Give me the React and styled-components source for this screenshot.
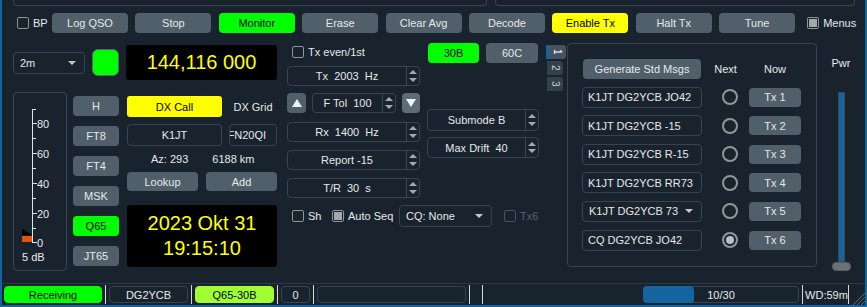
import React from "react";
import styled, { createGlobalStyle } from "styled-components";

const BG = "#19232d";
const LINE = "#37444f";
const BTN = "#505f69";
const TEXT = "#e6e8ea";
const BLUE = "#1464a0";

const GlobalStyle = createGlobalStyle`
  html, body { margin: 0; padding: 0; background: ${BG}; }
  * { box-sizing: border-box; }
`;

const Window = styled.div`
  width: 867px;
  height: 307px;
  background: ${BG};
  border-left: 2px solid ${BLUE};
  border-right: 2px solid ${BLUE};
  border-bottom: 2px solid ${BLUE};
  display: flex;
  flex-direction: column;
  font-family: "Liberation Sans", Arial, sans-serif;
  font-size: 11px;
  color: ${TEXT};
  overflow: hidden;
`;

const TopPanes = styled.div`
  display: flex;
  height: 6px;
  padding-left: 11px;
  gap: 8px;
`;

const Pane = styled.div`
  width: ${(p) => p.$w}px;
  height: 6px;
  border: 1px solid ${LINE};
  border-top: none;
  border-radius: 0 0 4px 4px;
`;

const ButtonRow = styled.div`
  display: flex;
  align-items: center;
  height: 20px;
  margin-top: 7px;
  padding-left: 15px;
`;

const ButtonGroup = styled.div`
  display: flex;
  gap: 7.4px;
`;

const Button = styled.div`
  width: ${(p) => p.$w}px;
  height: ${(p) => p.$h || 20}px;
  flex-shrink: 0;
  background: ${(p) => p.$bg || BTN};
  color: ${(p) => (p.$bg ? "#000" : TEXT)};
  border-radius: 4px;
  display: flex;
  align-items: center;
  justify-content: center;
  white-space: nowrap;
  margin-left: ${(p) => p.$ml || 0}px;
`;

const CheckLabel = styled.div`
  display: flex;
  align-items: center;
  gap: 4px;
  width: ${(p) => (p.$w ? `${p.$w}px` : "auto")};
  flex-shrink: 0;
  margin-left: ${(p) => p.$ml || 0}px;
  color: ${(p) => (p.$disabled ? "#56626c" : TEXT)};
  white-space: nowrap;
`;

const Box = styled.span`
  width: 12px;
  height: 12px;
  border: 1px solid ${(p) => (p.$disabled ? "#46535d" : "#8d949a")};
  border-radius: 2px;
  display: flex;
  align-items: center;
  justify-content: center;
  &::after {
    content: "";
    display: ${(p) => (p.$on ? "block" : "none")};
    width: 8px;
    height: 8px;
    background: #a3a8ad;
  }
`;

const Main = styled.div`
  display: flex;
  align-items: flex-start;
  margin-top: 10px;
  padding-left: 11px;
  height: 228px;
`;

/* ---------- left block ---------- */
const LeftBlock = styled.div`
  width: 264px;
  display: flex;
  flex-direction: column;
`;

const FreqRow = styled.div`
  display: flex;
  align-items: center;
  height: 35px;
  margin-top: 2px;
  gap: 7px;
`;

const Combo = styled.div`
  width: ${(p) => p.$w}px;
  height: ${(p) => p.$h || 22}px;
  flex-shrink: 0;
  border: 1px solid ${LINE};
  border-radius: 4px;
  display: flex;
  align-items: center;
  justify-content: space-between;
  padding: 0 8px 0 6px;
  margin-left: ${(p) => p.$ml || 0}px;
  &::after {
    content: "";
    border-left: 4px solid transparent;
    border-right: 4px solid transparent;
    border-top: 4px solid #c4c8cc;
  }
`;

const Led = styled.div`
  width: 27px;
  height: 27px;
  background: #00ff00;
  border: 1px solid #5a666f;
  border-radius: 6px;
`;

const Display = styled.div`
  width: ${(p) => p.$w}px;
  height: ${(p) => p.$h}px;
  background: #000;
  color: #ffff00;
  border-radius: 3px;
  font-size: 20px;
  line-height: 25px;
  display: flex;
  flex-direction: column;
  align-items: center;
  justify-content: center;
  margin-top: ${(p) => p.$mt || 0}px;
`;

const LowerRow = styled.div`
  display: flex;
  margin-top: 12px;
`;

const MeterBox = styled.div`
  width: 54px;
  height: 179px;
  border: 1px solid ${LINE};
  border-radius: 4px;
  overflow: hidden;
`;

const ModeColumn = styled.div`
  width: 46px;
  margin-left: 6px;
  padding-top: 4px;
  display: flex;
  flex-direction: column;
  gap: 10px;
`;

const DxColumn = styled.div`
  width: 150px;
  margin-left: 8px;
  padding-top: 4px;
  display: flex;
  flex-direction: column;
`;

const DxRow = styled.div`
  display: flex;
  align-items: center;
  height: ${(p) => p.$h}px;
  margin-top: ${(p) => p.$mt || 0}px;
`;

const Tag = styled.div`
  width: ${(p) => p.$w}px;
  height: 100%;
  background: #ffff00;
  color: #000;
  border-radius: 3px;
  display: flex;
  align-items: center;
  justify-content: center;
`;

const Plain = styled.div`
  width: ${(p) => (p.$w ? `${p.$w}px` : "auto")};
  margin-left: ${(p) => p.$ml || 0}px;
  text-align: center;
  white-space: nowrap;
`;

const LineEdit = styled.div`
  width: ${(p) => p.$w}px;
  height: ${(p) => p.$h || 22}px;
  margin-left: ${(p) => p.$ml || 0}px;
  border: 1px solid ${LINE};
  border-radius: 4px;
  display: flex;
  align-items: center;
  justify-content: ${(p) => p.$align || "flex-start"};
  padding: ${(p) => p.$pad || "0 5px"};
  overflow: hidden;
  white-space: nowrap;
`;

/* ---------- middle block ---------- */
const MiddleBlock = styled.div`
  width: 252px;
  margin-left: 10px;
  display: flex;
  flex-direction: column;
`;

const MiddleCols = styled.div`
  display: flex;
  gap: 7px;
`;

const Col = styled.div`
  width: ${(p) => p.$w}px;
  display: flex;
  flex-direction: column;
`;

const Line = styled.div`
  display: flex;
  align-items: center;
  height: ${(p) => p.$h}px;
  margin-top: ${(p) => p.$mt || 0}px;
  padding-left: ${(p) => p.$pl || 0}px;
`;

const SpinBox = styled.div`
  display: flex;
  width: ${(p) => (p.$w ? `${p.$w}px` : "100%")};
  height: ${(p) => p.$h || 20}px;
  margin-top: ${(p) => p.$mt || 0}px;
  margin-left: ${(p) => p.$ml || 0}px;
  border: 1px solid ${LINE};
  border-radius: 4px;
  flex-shrink: 0;
`;

const SpinText = styled.div`
  flex: 1;
  display: flex;
  align-items: center;
  justify-content: center;
  white-space: pre;
`;

const SpinButtons = styled.div`
  width: 13px;
  border-left: 1px solid ${LINE};
  display: flex;
  flex-direction: column;
  align-items: center;
  justify-content: space-evenly;
`;

const Tri = styled.span`
  width: 0;
  height: 0;
  border-left: ${(p) => p.$s || 4}px solid transparent;
  border-right: ${(p) => p.$s || 4}px solid transparent;
  ${(p) =>
    p.$down
      ? `border-top: ${p.$t || 4}px solid ${p.$c || "#a3abb1"};`
      : `border-bottom: ${p.$t || 4}px solid ${p.$c || "#a3abb1"};`}
`;

const StepButton = styled.div`
  width: ${(p) => p.$w}px;
  height: 20px;
  margin-left: ${(p) => p.$ml || 0}px;
  background: ${(p) => p.$bg || BTN};
  border-radius: 4px;
  display: flex;
  align-items: center;
  justify-content: center;
  flex-shrink: 0;
`;

/* ---------- tabs ---------- */
const TabColumn = styled.div`
  width: 20px;
  margin-left: 7px;
  margin-top: 2px;
  display: flex;
  flex-direction: column;
  gap: 2px;
`;

const Tab = styled.div`
  width: ${(p) => (p.$active ? 20 : 16)}px;
  height: 14px;
  margin-left: ${(p) => (p.$active ? 0 : 1)}px;
  background: ${(p) => (p.$active ? "#455364" : "#32414b")};
  border-left: ${(p) => (p.$active ? `3px solid ${BLUE}` : "none")};
  border-radius: 0 3px 3px 0;
  color: ${(p) => (p.$active ? "#ffffff" : "#c9ced2")};
  writing-mode: vertical-rl;
  font-size: 10px;
  display: flex;
  align-items: center;
  justify-content: center;
`;

const TabPanel = styled.div`
  width: 250px;
  height: 224px;
  margin-left: 1px;
  border: 1px solid ${LINE};
  border-radius: 4px;
  padding: 15px 0 0 14px;
  display: grid;
  grid-template-columns: 120px 47px 52px;
  grid-template-rows: 20px repeat(6, 21px);
  row-gap: 7.6px;
  align-items: center;
`;

const Radio = styled.div`
  width: 16px;
  height: 16px;
  margin-left: 20px;
  border: 2px solid #8f969c;
  border-radius: 50%;
  display: flex;
  align-items: center;
  justify-content: center;
  &::after {
    content: "";
    display: ${(p) => (p.$on ? "block" : "none")};
    width: 8px;
    height: 8px;
    border-radius: 50%;
    background: #b9bec2;
  }
`;

/* ---------- power slider ---------- */
const PwrColumn = styled.div`
  width: 48px;
  display: flex;
  flex-direction: column;
  align-items: center;
  padding-top: 14px;
`;

const PwrLabel = styled.div`
  line-height: 12px;
`;

const Track = styled.div`
  width: 7px;
  height: 170px;
  margin-top: 23px;
  background: ${BLUE};
  border: 1px solid #3d4a55;
`;

const Handle = styled.div`
  width: 19px;
  height: 9px;
  background: #6d7175;
  border: 1px solid #555a5e;
  border-radius: 4px;
`;

/* ---------- status bar ---------- */
const StatusBar = styled.div`
  display: flex;
  align-items: center;
  margin-top: 12px;
  border-top: 1px solid #2c3944;
  padding: 2px 0 2px 2px;
  height: 22px;
`;

const Cell = styled.div`
  width: ${(p) => p.$w}px;
  height: 17px;
  flex-shrink: 0;
  background: ${(p) => p.$bg || "transparent"};
  color: ${(p) => (p.$bg ? "#000" : TEXT)};
  border: 1px solid ${(p) => (p.$bg ? p.$bg : p.$plain ? "transparent" : LINE)};
  border-radius: 4px;
  display: flex;
  align-items: center;
  justify-content: center;
`;

const Sep = styled.span`
  width: 1px;
  height: 19px;
  background: #d5d8da;
  margin: 0 ${(p) => (p.$r ?? 3)}px 0 ${(p) => (p.$l ?? 3)}px;
  flex-shrink: 0;
`;

const Progress = styled.div`
  position: relative;
  width: 156px;
  height: 17px;
  margin-left: auto;
  border: 1px solid ${LINE};
  border-radius: 4px;
  display: flex;
  align-items: center;
  justify-content: center;
`;

const Chunk = styled.div`
  position: absolute;
  left: -1px;
  top: -1px;
  bottom: -1px;
  background: ${BLUE};
  border-radius: 4px;
`;

const ProgressText = styled.span`
  position: relative;
`;

const SignalMeter = () => {
  const major = [
    [30, "80"],
    [60, "60"],
    [90, "40"],
    [120, "20"],
    [149, "0"],
  ];
  const minor = [16, 45, 75, 105, 135];
  return (
    <svg width="52" height="177" viewBox="0 0 52 177">
      <line x1="18.5" y1="16" x2="18.5" y2="149" stroke="#dfe2e4" strokeWidth="1" />
      {minor.map((y) => (
        <line key={y} x1="18" y1={y + 0.5} x2="22" y2={y + 0.5} stroke="#dfe2e4" />
      ))}
      {major.map(([y, t]) => (
        <g key={t}>
          <line x1="18" y1={y + 0.5} x2="23" y2={y + 0.5} stroke="#dfe2e4" />
          <text
            x="23"
            y={y + 4.5}
            fill="#e6e8ea"
            fontSize="11"
            fontFamily="Liberation Sans, Arial, sans-serif"
          >
            {t}
          </text>
        </g>
      ))}
      <rect x="8" y="143" width="10" height="6" fill="#e2550f" />
      <polygon points="8,136 8,143 18,142" fill="#000" />
      <text
        x="8"
        y="168"
        fill="#e6e8ea"
        fontSize="11"
        fontFamily="Liberation Sans, Arial, sans-serif"
      >
        5 dB
      </text>
    </svg>
  );
};

const Spin = ({ w, h, mt, ml, children }) => (
  <SpinBox $w={w} $h={h} $mt={mt} $ml={ml}>
    <SpinText>{children}</SpinText>
    <SpinButtons>
      <Tri />
      <Tri $down />
    </SpinButtons>
  </SpinBox>
);

const SizeGrip = () => (
  <svg width="16" height="16" viewBox="0 0 16 16" style={{ marginTop: 4 }}>
    {[4, 8, 12].map((o) => (
      <line key={o} x1={16 - o} y1="16" x2="16" y2={16 - o} stroke="#5d6870" strokeWidth="1" />
    ))}
  </svg>
);

const topButtons = [
  { t: "Log QSO" },
  { t: "Stop" },
  { t: "Monitor", bg: "#00ff00" },
  { t: "Erase" },
  { t: "Clear Avg" },
  { t: "Decode" },
  { t: "Enable Tx", bg: "#ffff00" },
  { t: "Halt Tx" },
  { t: "Tune" },
];

const modes = [
  { t: "H" },
  { t: "FT8" },
  { t: "FT4" },
  { t: "MSK" },
  { t: "Q65", bg: "#00ff00" },
  { t: "JT65" },
];

const messages = [
  "K1JT DG2YCB JO42",
  "K1JT DG2YCB -15",
  "K1JT DG2YCB R-15",
  "K1JT DG2YCB RR73",
  "K1JT DG2YCB 73",
  "CQ DG2YCB JO42",
];

export default function App() {
  return (
    <>
      <GlobalStyle />
      <Window>
        <TopPanes>
          <Pane $w={474} />
          <Pane $w={360} />
        </TopPanes>

        <ButtonRow>
          <CheckLabel $w={35}>
            <Box />
            BP
          </CheckLabel>
          <ButtonGroup>
            {topButtons.map((b) => (
              <Button key={b.t} $w={76} $bg={b.bg}>
                {b.t}
              </Button>
            ))}
          </ButtonGroup>
          <CheckLabel $ml={12}>
            <Box $on />
            Menus
          </CheckLabel>
        </ButtonRow>

        <Main>
          <LeftBlock>
            <FreqRow>
              <Combo $w={72}>2m</Combo>
              <Led />
              <Display $w={151} $h={35}>
                144,116 000
              </Display>
            </FreqRow>
            <LowerRow>
              <MeterBox>
                <SignalMeter />
              </MeterBox>
              <ModeColumn>
                {modes.map((m) => (
                  <Button key={m.t} $w={46} $bg={m.bg}>
                    {m.t}
                  </Button>
                ))}
              </ModeColumn>
              <DxColumn>
                <DxRow $h={21}>
                  <Tag $w={95}>DX Call</Tag>
                  <Plain $w={48} $ml={7}>
                    DX Grid
                  </Plain>
                </DxRow>
                <DxRow $h={22} $mt={7}>
                  <LineEdit $w={95} $align="center">
                    K1JT
                  </LineEdit>
                  <LineEdit $w={48} $ml={7} $align="flex-end" $pad="0 10px 0 0">
                    FN20QI
                  </LineEdit>
                </DxRow>
                <DxRow $h={26}>
                  <Plain $ml={24}>Az: 293</Plain>
                  <Plain $ml={24}>6188 km</Plain>
                </DxRow>
                <DxRow $h={19}>
                  <Button $w={71} $h={19}>
                    Lookup
                  </Button>
                  <Button $w={71} $h={19} $ml={8}>
                    Add
                  </Button>
                </DxRow>
                <Display $w={150} $h={62} $mt={14}>
                  <span>2023 Okt 31</span>
                  <span>19:15:10</span>
                </Display>
              </DxColumn>
            </LowerRow>
          </LeftBlock>

          <MiddleBlock>
            <MiddleCols>
              <Col $w={133}>
                <Line $h={17} $pl={5}>
                  <CheckLabel>
                    <Box />
                    Tx even/1st
                  </CheckLabel>
                </Line>
                <Spin mt={6}>{"Tx  2003  Hz"}</Spin>
                <Line $h={20} $mt={7}>
                  <StepButton $w={19}>
                    <Tri $s={5} $t={8} $c="#f2f4f5" />
                  </StepButton>
                  <Spin w={84} ml={6}>{"F Tol  100"}</Spin>
                  <StepButton $w={18} $ml={6} $bg="#5f6c76">
                    <Tri $down $s={5} $t={8} $c="#f2f4f5" />
                  </StepButton>
                </Line>
                <Spin mt={9}>{"Rx  1400  Hz"}</Spin>
                <Spin mt={8}>{"Report -15"}</Spin>
                <Spin mt={8}>{"T/R  30  s"}</Spin>
              </Col>
              <Col $w={112}>
                <Line $h={20}>
                  <Button $w={51} $ml={1} $bg="#00ff00">
                    30B
                  </Button>
                  <Button $w={52} $ml={7}>
                    60C
                  </Button>
                </Line>
                <Spin h={22} mt={46}>
                  {"Submode B"}
                </Spin>
                <Spin h={21} mt={6}>
                  {"Max Drift  40"}
                </Spin>
              </Col>
            </MiddleCols>
            <Line $h={22} $mt={7} $pl={5}>
              <CheckLabel $w={40}>
                <Box />
                Sh
              </CheckLabel>
              <CheckLabel $w={67}>
                <Box $on />
                Auto Seq
              </CheckLabel>
              <Combo $w={93}>CQ: None</Combo>
              <CheckLabel $ml={12} $disabled>
                <Box $disabled />
                Tx6
              </CheckLabel>
            </Line>
          </MiddleBlock>

          <TabColumn>
            <Tab $active>1</Tab>
            <Tab>2</Tab>
            <Tab>3</Tab>
          </TabColumn>

          <TabPanel>
            <Button $w={118} $ml={1}>
              Generate Std Msgs
            </Button>
            <Plain>Next</Plain>
            <Plain>Now</Plain>
            {messages.map((m, i) => (
              <React.Fragment key={m}>
                {i === 4 ? (
                  <Combo $w={120} $h={21}>
                    {m}
                  </Combo>
                ) : (
                  <LineEdit $w={120} $h={21}>
                    {m}
                  </LineEdit>
                )}
                <Radio $on={i === 5} />
                <Button $w={52} $h={19}>
                  Tx {i + 1}
                </Button>
              </React.Fragment>
            ))}
          </TabPanel>

          <PwrColumn>
            <PwrLabel>Pwr</PwrLabel>
            <Track />
            <Handle />
          </PwrColumn>
        </Main>

        <StatusBar>
          <Cell $w={98} $bg="#00ff00">
            Receiving
          </Cell>
          <Sep />
          <Cell $w={79}>DG2YCB</Cell>
          <Sep />
          <Cell $w={79} $bg="#a0ff33">
            Q65-30B
          </Cell>
          <Sep />
          <Cell $w={29}>0</Cell>
          <Sep />
          <Cell $w={149} />
          <Sep />
          <Sep $l={9} />
          <Progress>
            <Chunk style={{ width: `${(10 / 30) * 100}%` }} />
            <ProgressText>10/30</ProgressText>
          </Progress>
          <Sep />
          <Cell $w={41} $plain>
            WD:59m
          </Cell>
          <Sep $l={1} $r={0} />
          <SizeGrip />
        </StatusBar>
      </Window>
    </>
  );
}
